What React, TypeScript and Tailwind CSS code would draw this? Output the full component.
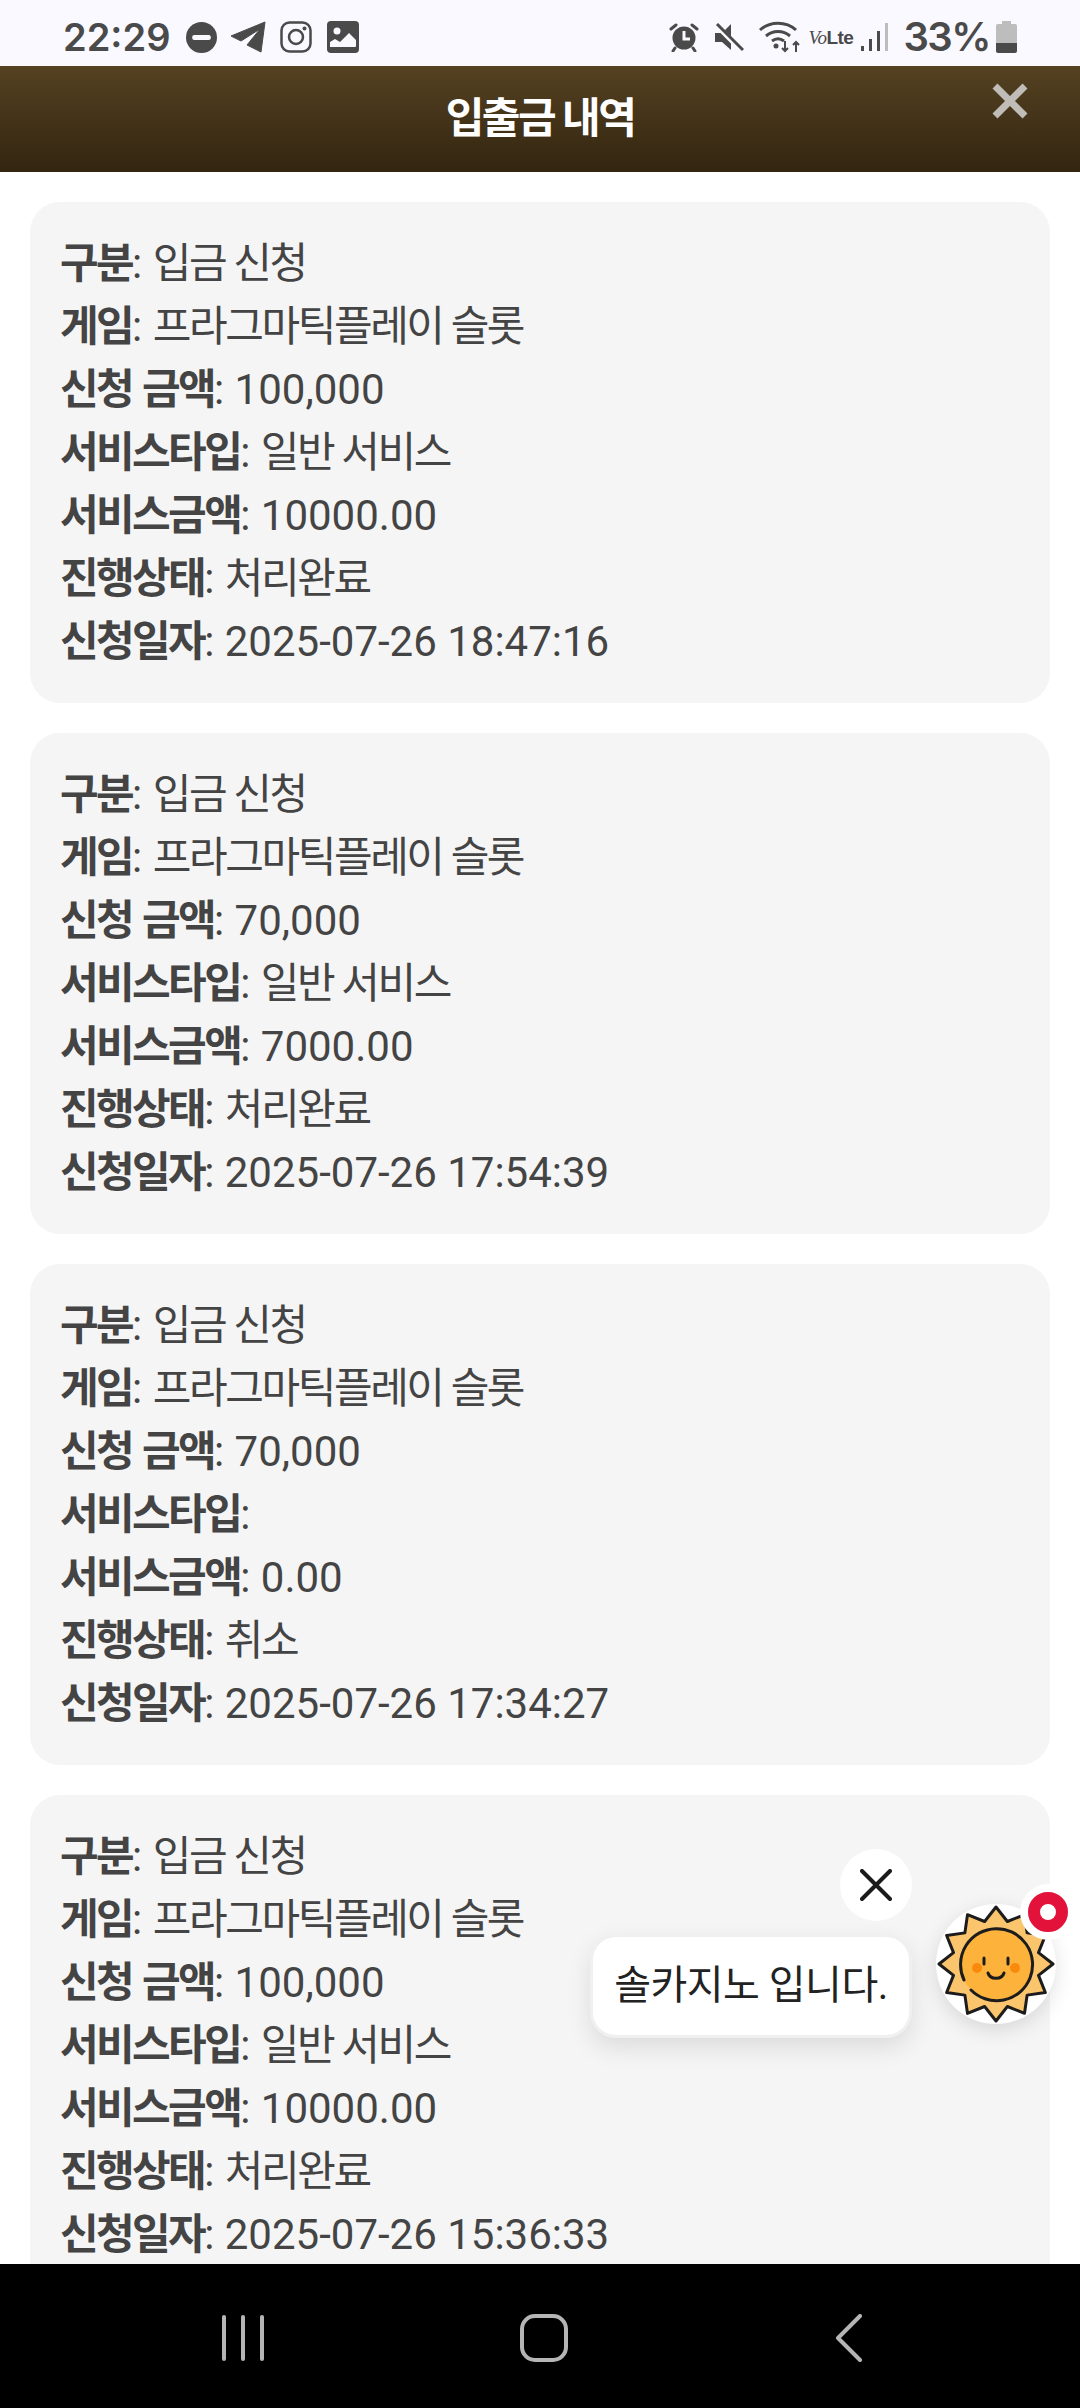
import React from 'react';

const records = [
  { type: '일반 서비스', bonus: '10000.00', amount: '100,000', status: '처리완료', date: '2025-07-26 18:47:16' },
  { type: '일반 서비스', bonus: '7000.00', amount: '70,000', status: '처리완료', date: '2025-07-26 17:54:39' },
  { type: '', bonus: '0.00', amount: '70,000', status: '취소', date: '2025-07-26 17:34:27' },
  { type: '일반 서비스', bonus: '10000.00', amount: '100,000', status: '처리완료', date: '2025-07-26 15:36:33' },
];

// Korean runs are set tighter than the Noto default, numbers are not
const Row = ({ label, value, korean }: { label: string; value: string; korean?: boolean }) => (
  <div>
    <strong className="font-bold tracking-[-2.6px] [word-spacing:2px]">{label}</strong>: <span className={korean ? 'tracking-[-2.4px]' : ''}>{value}</span>
  </div>
);

const SunIcon = () => {
  const points: string[] = [];
  for (let i = 0; i < 24; i++) {
    const r = i % 2 === 0 ? 57 : 44;
    const a = (i * Math.PI) / 12 - Math.PI / 2;
    points.push(`${60 + r * Math.cos(a)},${60 + r * Math.sin(a)}`);
  }
  return (
    <svg viewBox="0 0 120 120" className="w-[120px] h-[120px]">
      <polygon points={points.join(' ')} fill="#fbc56d" stroke="#1c1c1c" strokeWidth="3" strokeLinejoin="round" />
      <circle cx="60" cy="60" r="36" fill="#fdb23c" />
      <path d="M28 76 A36 36 0 1 1 35 86" fill="none" stroke="#1c1c1c" strokeWidth="3" strokeLinecap="round" />
      <circle cx="41" cy="64" r="5" fill="#f98a0c" />
      <circle cx="79" cy="64" r="5" fill="#f98a0c" />
      <path d="M48 54v6M72 54v6" stroke="#1c1c1c" strokeWidth="3" strokeLinecap="round" />
      <path d="M52 69c2 7 14 7 16 0" fill="none" stroke="#1c1c1c" strokeWidth="3" strokeLinecap="round" />
    </svg>
  );
};

const StatusBar = () => (
  <div className="h-[66px] shrink-0 bg-[#f9f9ff] flex items-center justify-between pt-[8px] pl-[63px] pr-[63px] text-[#4a4a4a]">
    <div className="flex items-center">
      <span className="text-[38px] font-semibold leading-none font-['Inter',sans-serif] w-[123px]">22:29</span>
      <svg viewBox="0 0 30 30" className="w-[31px] h-[31px]">
        <circle cx="15" cy="15" r="15" fill="#4a4a4a" />
        <rect x="6" y="12.5" width="18" height="5" rx="2" fill="#f9f9ff" />
      </svg>
      <svg viewBox="0 0 36 32" className="w-[36px] h-[32px] ml-[13px]">
        <path d="M1 15 35 1 31 31 17 24 30 8 11 20Z" fill="#4a4a4a" strokeLinejoin="round" stroke="#4a4a4a" strokeWidth="1" />
      </svg>
      <svg viewBox="0 0 32 32" className="w-[32px] h-[32px] ml-[14px]">
        <rect x="1.5" y="1.5" width="29" height="29" rx="8" fill="none" stroke="#4a4a4a" strokeWidth="2.5" />
        <circle cx="16" cy="16" r="7" fill="none" stroke="#4a4a4a" strokeWidth="2.5" />
        <circle cx="24.5" cy="7.5" r="2" fill="#4a4a4a" />
      </svg>
      <svg viewBox="0 0 32 32" className="w-[32px] h-[32px] ml-[15px]">
        <rect width="32" height="32" rx="4" fill="#4a4a4a" />
        <circle cx="10" cy="10" r="3.5" fill="#f9f9ff" />
        <path d="M3 26v-5l5-3 5 3 9-9 7 7v6a1 1 0 0 1-1 1H3Z" fill="#f9f9ff" />
      </svg>
    </div>
    <div className="flex items-center">
      <svg viewBox="0 0 30 30" className="w-[30px] h-[30px]">
        <circle cx="15" cy="16" r="11.5" fill="#4a4a4a" />
        <path d="M15 9v8h6" fill="none" stroke="#f9f9ff" strokeWidth="3" />
        <path d="M2 7l5-4M28 7l-5-4M6 26l-2 3M24 26l2 3" stroke="#4a4a4a" strokeWidth="3" strokeLinecap="round" />
      </svg>
      <svg viewBox="0 0 30 30" className="w-[30px] h-[30px] ml-[15px]">
        <path d="M1 11h7l9-9v26l-9-8H1Z" fill="#4a4a4a" />
        <path d="M2 3l26 26" stroke="#f9f9ff" strokeWidth="5" />
        <path d="M3 2l26 26" stroke="#4a4a4a" strokeWidth="3" />
      </svg>
      <svg viewBox="0 0 44 34" className="w-[44px] h-[34px] ml-[14px]">
        <path d="M2 10c10-9 26-9 36 0M8 16c7-6 17-6 24 0M14 21c4-3 8-3 12 0" fill="none" stroke="#4a4a4a" strokeWidth="3" />
        <circle cx="18" cy="26" r="2.5" fill="#4a4a4a" />
        <path d="M27 21v10m-3-3 3 3 3-3M38 32V22m-3 3 3-3 3 3" fill="none" stroke="#4a4a4a" strokeWidth="2" />
      </svg>
      <span className="ml-[6px] w-[41px] text-[19px] leading-none font-bold whitespace-nowrap tracking-[-0.5px] font-['Liberation_Sans',sans-serif]">
        <span className="italic font-normal font-['Liberation_Serif',serif]">Vo</span>Lte
      </span>
      <svg viewBox="0 0 28 30" className="w-[28px] h-[30px] ml-[11px]">
        <rect x="1" y="24" width="3" height="5" fill="#4a4a4a" />
        <rect x="9" y="17" width="3" height="12" fill="#4a4a4a" />
        <rect x="17" y="9" width="3" height="20" fill="#4a4a4a" />
        <rect x="25" y="1" width="3" height="28" fill="#bdbdbd" />
      </svg>
      <span className="ml-[15px] text-[40px] font-semibold leading-none font-['Inter',sans-serif] tracking-[-1.5px]">33%</span>
      <svg viewBox="0 0 21 32" className="w-[21px] h-[32px] ml-[6px]">
        <path d="M6 0h9v3h4a2 2 0 0 1 2 2v10H0V5a2 2 0 0 1 2-2h4Z M0 15h21v7H0Z" fill="#bdbdbd" />
        <path d="M0 22h21v8a2 2 0 0 1-2 2H2a2 2 0 0 1-2-2Z" fill="#4a4a4a" />
      </svg>
    </div>
  </div>
);

const NavBar = () => (
  <div className="h-[144px] shrink-0 bg-black flex items-start justify-between pt-[50px] pl-[222px] pr-[218px]">
    <div className="flex gap-[15px] mt-[1px]">
      <div className="w-[4px] h-[46px] rounded-full bg-[#b5b5b5]" />
      <div className="w-[4px] h-[46px] rounded-full bg-[#b5b5b5]" />
      <div className="w-[4px] h-[46px] rounded-full bg-[#b5b5b5]" />
    </div>
    <div className="w-[48px] h-[48px] rounded-[15px] border-[4px] border-[#b5b5b5] mr-[12px]" />
    <svg viewBox="0 0 27 48" className="w-[27px] h-[48px]">
      <path d="M25 2 3 24l22 22" fill="none" stroke="#b5b5b5" strokeWidth="4" strokeLinecap="round" strokeLinejoin="round" />
    </svg>
  </div>
);

export default function App() {
  return (
    <div className="relative h-[2408px] w-[1080px] overflow-hidden flex flex-col bg-white font-['Roboto','Noto_Sans_CJK_KR',sans-serif]">
      <StatusBar />
      <div className="h-[106px] shrink-0 relative flex items-center justify-center bg-gradient-to-b from-[#554222] to-[#332510]">
        <h1 className="text-[42px] font-bold text-white leading-none tracking-[-2.5px]">입출금 내역</h1>
        <svg viewBox="0 0 36 36" className="absolute right-[52px] top-[17px] w-[36px] h-[36px]">
          <path d="M3 3l30 30M33 3 3 33" stroke="#c0bdb8" strokeWidth="7" />
        </svg>
      </div>
      <div className="flex-1 overflow-hidden px-[30px] pt-[30px] flex flex-col gap-[30px]">
        {records.map((r, i) => (
          <div key={i} className="shrink-0 bg-[#f5f5f5] rounded-[30px] p-[30px] text-[42px] leading-[63px] text-[#444444]">
            <Row label="구분" value="입금 신청" korean />
            <Row label="게임" value="프라그마틱플레이 슬롯" korean />
            <Row label="신청 금액" value={r.amount} />
            <Row label="서비스타입" value={r.type} korean />
            <Row label="서비스금액" value={r.bonus} />
            <Row label="진행상태" value={r.status} korean />
            <Row label="신청일자" value={r.date} />
          </div>
        ))}
      </div>
      <NavBar />

      {/* chat widget */}
      <div className="absolute left-[840px] top-[1849px] w-[72px] h-[72px] rounded-full bg-white flex items-center justify-center">
        <svg viewBox="0 0 32 32" className="w-[32px] h-[32px]">
          <path d="M2 2l28 28M30 2 2 30" stroke="#1a1a1a" strokeWidth="4" strokeLinecap="round" />
        </svg>
      </div>
      <div className="absolute left-[590px] top-[1934px] w-[322px] h-[104px] rounded-[26px] bg-white border-[3px] border-[#f0f0f0] shadow-[0_10px_24px_rgba(0,0,0,0.1)] flex items-center justify-center text-[40px] tracking-[-0.5px] text-[#222222] whitespace-nowrap">
        솔카지노 입니다.
      </div>
      <div className="absolute left-[936px] top-[1904px] w-[120px] h-[120px] rounded-full bg-white shadow-[0_6px_20px_rgba(0,0,0,0.12)]">
        <SunIcon />
      </div>
      <div className="absolute left-[1020px] top-[1884px] w-[56px] h-[56px] rounded-full bg-white flex items-center justify-center">
        <div className="w-[40px] h-[40px] rounded-full border-[12px] border-[#e3123a] bg-white" />
      </div>
    </div>
  );
}
